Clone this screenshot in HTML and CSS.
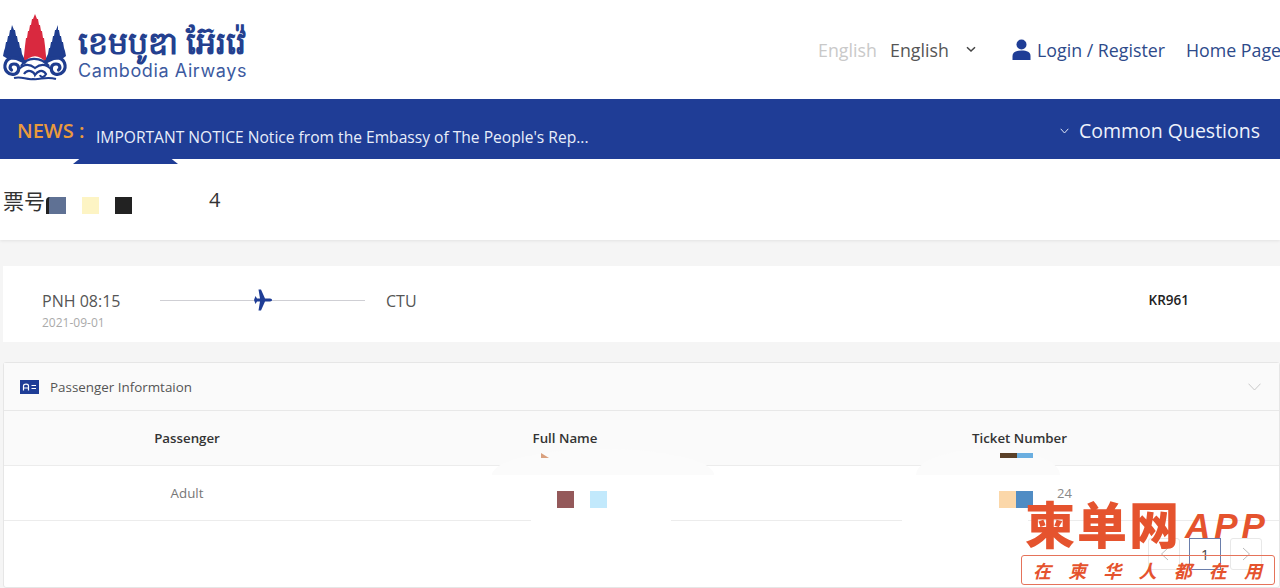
FILE: index.html
```html
<!DOCTYPE html>
<html lang="en">
<head>
<meta charset="utf-8">
<title>Cambodia Airways</title>
<link rel="stylesheet" href="styles.css">
</head>
<body>
<header class="topbar">
  <a class="logo">
    <svg class="logo-mark" width="72" height="72" viewBox="0 0 72 72">
      <path d="M12 15 L14 20 L15 20 L16 26 L17 26 L18 32 L19 32 L20 38 L21 38 L22 44 L24 48 L25 54 L16 50 L8 49 L3 46 L4 41 L5 38 L6 32 L7 32 L8 26 L9 26 L10 20 L11 20 Z" fill="#1f3d8f"/>
      <path d="M58 15 L56 20 L55 20 L54 26 L53 26 L52 32 L51 32 L50 38 L49 38 L48 44 L46 48 L45 54 L54 50 L62 49 L66 46 L65 41 L64 38 L63 32 L62 32 L61 26 L60 26 L59 20 L58 20 Z" fill="#1f3d8f"/>
      <path d="M35 4 L37 9 L38 9 L39 15 L40 15 L41 21 L42 21 L43 28 L44 28 L45 36 L46 46 L46 53 C40 44 30 44 24 53 L24 46 L25 36 L26 28 L27 28 L28 21 L29 21 L30 15 L31 15 L32 9 L33 9 Z" fill="#d9293f"/>
      <path d="M25 52 C18 46 8 46 5.500 53 C3 60 9 66 15 64 C20 62 20 54 14 54 C10 54 9 58 11.500 60" fill="none" stroke="#1f3d8f" stroke-width="3.200" stroke-linecap="round"/>
      <path d="M45 52 C52 46 62 46 64.500 53 C67 60 61 66 55 64 C50 62 50 54 56 54 C60 54 61 58 58.500 60" fill="none" stroke="#1f3d8f" stroke-width="3.200" stroke-linecap="round"/>
      <path d="M21 56 C27 47 40 46 49 56" fill="none" stroke="#1f3d8f" stroke-width="2.200"/>
      <path d="M18 60 C24 53 30 54 35 58 C40 54 46 53 52 60" fill="none" stroke="#1f3d8f" stroke-width="2.200"/>
      <path d="M24 64 C28 58 34 62 35 65 C37 62 42 58 46 64 C44 68 41 68 40 65" fill="none" stroke="#1f3d8f" stroke-width="2.200"/>
      <path d="M14 68 C22 66 26 70 33 69 C40 70 46 66 56 69" fill="none" stroke="#1f3d8f" stroke-width="2"/>
    </svg>
    <span class="logo-text">
      <span class="logo-km">ខេមបូឌា អ៊ែរវ៉េ</span>
      <span class="logo-en">Cambodia Airways</span>
    </span>
  </a>
  <nav class="topnav">
    <span class="lang-ghost">English</span>
    <span class="lang">English</span>
    <svg class="lang-caret" width="10" height="7" viewBox="0 0 10 7"><path d="M1 1.200 L5 5 L9 1.200" fill="none" stroke="#444" stroke-width="1.500"/></svg>
    <a class="login">
      <svg width="19" height="21" viewBox="0 0 19 21"><circle cx="9.500" cy="5.500" r="5" fill="#1f3d96"/><path d="M0.500 21 V17 C0.500 13 4 11.500 9.500 11.500 S18.500 13 18.500 17 V21 Z" fill="#1f3d96"/></svg>
      <span>Login / Register</span>
    </a>
    <a class="home">Home Page</a>
  </nav>
</header>

<section class="newsbar">
  <span class="news-label">NEWS :</span>
  <span class="news-text">IMPORTANT NOTICE Notice from the Embassy of The People's Rep...</span>
  <span class="faq">
    <svg width="9" height="6" viewBox="0 0 9 6"><path d="M0.700 0.800 L4.500 5 L8.300 0.800" fill="none" stroke="#dfe6f5" stroke-width="1"/></svg>
    <span>Common Questions</span>
  </span>
  <i class="news-notch"></i>
</section>

<section class="ticket">
  <span class="ticket-label">票号</span>
  <i class="sq sq-slate"></i>
  <i class="sq sq-cream"></i>
  <i class="sq sq-black"></i>
  <span class="ticket-end">4</span>
</section>

<main class="content">
  <section class="flight">
    <div class="flight-from">
      <div class="flight-city">PNH 08:15</div>
      <div class="flight-date">2021-09-01</div>
    </div>
    <div class="flight-line">
      <svg class="plane" width="18" height="22" viewBox="0 0 18 22"><path d="M0 11 L1.500 7 L3 9.500 L6 9.500 L4.500 0.500 L7 0.500 L11 9.500 L16 9.500 C17.500 9.500 18 10.500 18 11 C18 11.500 17.500 12.500 16 12.500 L11 12.500 L7 21.500 L4.500 21.500 L6 12.500 L3 12.500 L1.500 15 Z" fill="#1f3d96"/></svg>
    </div>
    <div class="flight-to">CTU</div>
    <div class="flight-no">KR961</div>
  </section>

  <section class="panel">
    <div class="panel-head">
      <svg width="19" height="14" viewBox="0 0 19 14"><rect width="19" height="14" fill="#1f3d96"/><path d="M3.500 10.500 L3.500 6 C3.500 3.500 8.500 3.500 8.500 6 L8.500 10.500 M3.500 8 H8.500" fill="none" stroke="#fff" stroke-width="1.200"/><path d="M11.500 5.500 H16 M11.500 8.500 H16" stroke="#fff" stroke-width="1.200"/></svg>
      <span class="panel-title">Passenger Informtaion</span>
      <svg class="panel-caret" width="13" height="8" viewBox="0 0 13 8"><path d="M0.500 0.700 L6.500 7 L12.500 0.700" fill="none" stroke="#c9c9c9" stroke-width="1"/></svg>
    </div>
    <div class="table-row table-head">
      <div>Passenger</div>
      <div>Full Name</div>
      <div>Ticket Number</div>
    </div>
    <div class="table-row table-body">
      <div>Adult</div>
      <div class="name-cell"><i class="sq sq-maroon"></i><i class="sq sq-sky"></i></div>
      <div class="ticket-cell"><i class="sq sq-peach"></i><i class="sq sq-blue"></i><span class="ticket-tail">24</span></div>
    </div>
    <div class="pager">
      <span class="page-btn">
        <svg width="9" height="14" viewBox="0 0 9 14"><path d="M8 1 L1.500 7 L8 13" fill="none" stroke="#bbb" stroke-width="1"/></svg>
      </span>
      <span class="page-btn page-current">1</span>
      <span class="page-btn">
        <svg width="9" height="14" viewBox="0 0 9 14"><path d="M1 1 L7.500 7 L1 13" fill="none" stroke="#bbb" stroke-width="1"/></svg>
      </span>
    </div>
    <i class="smudge smudge-a"></i>
    <i class="smudge smudge-b"></i>
    <i class="smudge smudge-c"></i>
    <i class="smudge smudge-d"></i>
    <i class="mark mark-tan"></i>
    <i class="mark mark-bar"></i>
  </section>
</main>

<aside class="watermark">
  <div class="wm-top"><span class="wm-cn">柬单网</span><span class="wm-app">APP</span></div>
  <div class="wm-box"><span>在</span><span>柬</span><span>华</span><span>人</span><span>都</span><span>在</span><span>用</span></div>
</aside>
</body>
</html>
```
FILE: styles.css
```css
* { box-sizing: border-box; }
html, body { margin: 0; padding: 0; }
body {
  width: 1280px;
  height: 588px;
  overflow: hidden;
  position: relative;
  background: #f5f5f5;
  font-family: "Open Sans", "Noto Sans CJK SC", sans-serif;
  color: #444;
}
i { display: block; }

.topbar {
  height: 99px;
  background: #fff;
  display: flex;
  align-items: center;
  justify-content: space-between;
}
.logo { display: flex; align-items: flex-start; gap: 6px; height: 72px; margin-top: -7px; }
.logo-text { display: flex; flex-direction: column; padding-top: 14px; }
.logo-km { font-family: "Noto Sans", "Noto Sans CJK SC", sans-serif; font-size: 31.500px; font-weight: 700; line-height: 36px; color: #24408f; white-space: nowrap; height: 35px; }
.logo-en { font-family: "Inter", "Open Sans", sans-serif; font-size: 18px; line-height: 24px; letter-spacing: 0.600px; white-space: nowrap; color: #3c5a9f; }

.topnav { display: flex; align-items: center; font-size: 17.800px; height: 30px; }
.lang-ghost { color: #c9c9c9; width: 72px; }
.lang { color: #555; width: 76px; }
.lang-caret { margin-right: 36px; }
.login { display: flex; align-items: center; gap: 6px; color: #2d4a8a; margin-right: 21px; }
.home { color: #2d4a8a; white-space: nowrap; width: 94px; }

.newsbar {
  position: relative;
  height: 60px;
  background: #1f3d96;
  display: flex;
  align-items: center;
  padding-left: 17px;
}
.news-label { color: #ea9a3c; font-size: 20px; font-weight: 600; width: 79px; margin-top: 2px; white-space: nowrap; }
.news-text { color: #e8eefa; font-size: 15.600px; margin-top: 15px; white-space: nowrap; }
.faq { margin-left: auto; margin-right: 20px; display: flex; align-items: center; gap: 10px; color: #eef2fb; font-size: 19.500px; margin-top: 3px; }
.news-notch {
  position: absolute;
  left: 73px;
  top: 60px;
  width: 105px;
  height: 5px;
  background: #1f3d96;
  clip-path: polygon(6% 0, 94% 0, 100% 100%, 0 100%);
}

.ticket {
  height: 81px;
  background: #fff;
  box-shadow: 0 1px 3px rgba(0,0,0,.08);
  display: flex;
  align-items: center;
  padding: 0 0 0 3px;
  font-size: 20px;
  margin-bottom: 26px;
  color: #333;
}
.ticket-label { width: 43px; font-family: "Noto Sans CJK SC", sans-serif; font-size: 21px; }
.sq { width: 17px; height: 17px; flex: none; }
.sq-slate { width: 20px; background: #5f7194; margin-right: 16px; margin-top: 11px; border-radius: 4px 0 0 0; border-left: 3px solid #222; }
.sq-cream { background: #fdf4c4; margin-right: 16px; margin-top: 11px; }
.sq-black { background: #222; margin-top: 11px; }
.ticket-end { margin-left: 77px; }

.content { padding-left: 3px; }

.flight {
  height: 76px;
  background: #fff;
  display: flex;
  padding-left: 39px;
  margin-bottom: 20px;
}
.flight-from { width: 118px; padding-top: 25px; }
.flight-city { font-size: 16px; line-height: 20px; color: #555; white-space: nowrap; }
.flight-date { font-size: 12px; line-height: 16px; margin-top: 4px; color: #aaa; }
.flight-line {
  width: 205px;
  height: 1px;
  background: #cfcfd4;
  margin-top: 34px;
  position: relative;
}
.plane { position: absolute; left: 94px; top: -11px; }
.flight-to { margin-left: 21px; padding-top: 25px; font-size: 16px; line-height: 20px; color: #555; }
.flight-no { margin-left: auto; margin-right: 91px; padding-top: 24px; font-size: 13.500px; line-height: 20px; font-weight: 600; color: #222; }

.panel {
  position: relative;
  width: 1277px;
  height: 226px;
  background: #fff;
  border: 1px solid #e6e6e6;
  border-radius: 3px;
}
.panel-head {
  height: 48px;
  background: #fafafa;
  border-bottom: 1px solid #e8e8e8;
  display: flex;
  align-items: center;
  padding: 0 18px 0 16px;
  gap: 11px;
}
.panel-title { font-size: 13.400px; color: #555; }
.panel-caret { margin-left: auto; }

.table-row {
  display: grid;
  grid-template-columns: 366px 390px 1fr;
  text-align: center;
  border-bottom: 1px solid #ececec;
  font-size: 13.300px;
}
.table-row > div { display: flex; justify-content: center; align-items: center; }
.table-head { height: 55px; background: #fafafa; font-weight: 600; color: #333; padding-bottom: 1px; }
.table-body { height: 55px; color: #777; }
.name-cell { gap: 16px; padding-top: 13px; padding-left: 34px; }
.sq-maroon { background: #94595a; }
.sq-sky { background: #c2e9fc; }
.ticket-cell { position: relative; padding-top: 13px; padding-right: 8px; }
.sq-peach { background: #fbd7a9; }
.sq-blue { background: #508cc4; }
.ticket-tail { position: absolute; left: 297px; top: 18px; font-size: 13px; color: #888; }

.pager {
  display: flex;
  justify-content: flex-end;
  gap: 9px;
  padding: 17px 17px 0 0;
}
.page-btn {
  width: 32px;
  height: 32px;
  border: 1px solid #e8e8e8;
  border-radius: 3px;
  display: flex;
  align-items: center;
  justify-content: center;
  font-size: 14px;
  color: #444;
}
.page-current { border-color: #6a7eab; border-radius: 0; }

.smudge { position: absolute; border-radius: 50% 50% 0 0 / 100% 100% 0 0; }
.smudge-a { left: 488px; top: 86px; width: 222px; height: 26px; background: #fbfbfb; }
.smudge-b { left: 527px; top: 150px; width: 140px; height: 10px; background: #fff; border-radius: 0; }
.smudge-c { left: 912px; top: 86px; width: 144px; height: 26px; background: #fbfbfb; }
.smudge-d { left: 898px; top: 150px; width: 126px; height: 10px; background: #fff; border-radius: 0; }
.mark { position: absolute; }
.mark-tan { left: 537px; top: 90px; width: 8px; height: 5px; background: #d9a07e; clip-path: polygon(0 0, 100% 100%, 0 100%); }
.mark-bar { left: 996px; top: 90px; width: 33px; height: 5px; background: linear-gradient(90deg, #5a4028 50%, #6aaee0 50%); }

.watermark {
  position: absolute;
  left: 1021px;
  top: 497px;
  width: 254px;
  color: #e5532e;
}
.wm-top { display: flex; align-items: center; height: 58px; padding-left: 4px; }
.wm-cn { font-family: "Noto Sans CJK SC", sans-serif; font-weight: 900; font-size: 50px; letter-spacing: 2px; line-height: 58px; margin-top: -8px; white-space: nowrap; }
.wm-app { font-family: "Liberation Sans", sans-serif; font-weight: 700; font-style: italic; font-size: 35px; letter-spacing: 4px; margin-left: 4px; }
.wm-box {
  height: 30px;
  border: 1px solid #e5735a;
  border-radius: 3px;
  display: flex;
  justify-content: space-between;
  align-items: center;
  padding: 0 12px 0 11px;
  font-family: "Noto Sans CJK SC", sans-serif;
  font-style: italic;
  font-weight: 700;
  font-size: 18px;
}
```
